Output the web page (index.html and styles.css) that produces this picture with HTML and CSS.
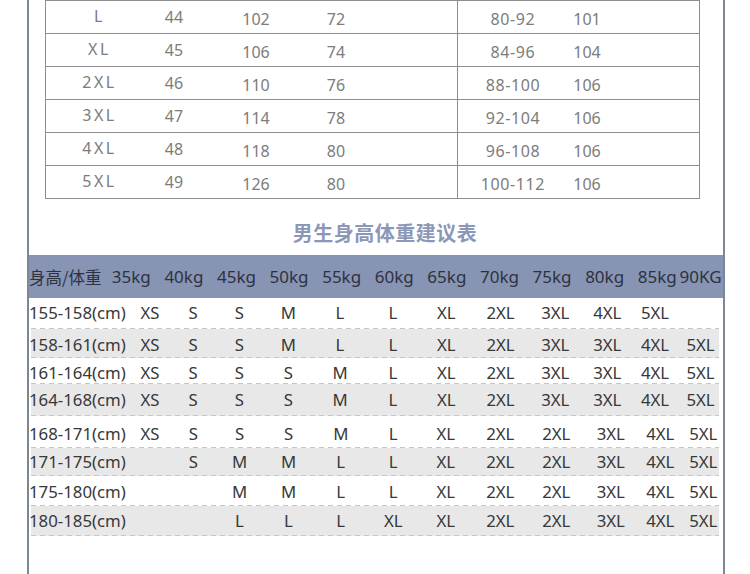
FILE: index.html
```html
<!DOCTYPE html>
<html lang="zh-CN">
<head>
<meta charset="utf-8">
<title>尺码表</title>
<link rel="stylesheet" href="styles.css">
</head>
<body>
<div class="frame">
  <div class="size-table">
    <div class="srow"><span class="sz">L</span><span>44</span><span class="low">102</span><span class="low">72</span><span class="gap"></span><span class="low rng">80-92</span><span class="low">101</span><span></span></div>
    <div class="srow"><span class="sz">XL</span><span>45</span><span class="low">106</span><span class="low">74</span><span class="gap"></span><span class="low rng">84-96</span><span class="low">104</span><span></span></div>
    <div class="srow"><span class="sz">2XL</span><span>46</span><span class="low">110</span><span class="low">76</span><span class="gap"></span><span class="low rng">88-100</span><span class="low">106</span><span></span></div>
    <div class="srow"><span class="sz">3XL</span><span>47</span><span class="low">114</span><span class="low">78</span><span class="gap"></span><span class="low rng">92-104</span><span class="low">106</span><span></span></div>
    <div class="srow"><span class="sz">4XL</span><span>48</span><span class="low">118</span><span class="low">80</span><span class="gap"></span><span class="low rng">96-108</span><span class="low">106</span><span></span></div>
    <div class="srow"><span class="sz">5XL</span><span>49</span><span class="low">126</span><span class="low">80</span><span class="gap"></span><span class="low rng">100-112</span><span class="low">106</span><span></span></div>
  </div>

  <h2 class="title">男生身高体重建议表</h2>

  <div class="head">
    <span class="lbl">身高/体重</span><span>35kg</span><span>40kg</span><span>45kg</span><span>50kg</span><span>55kg</span><span>60kg</span><span>65kg</span><span>70kg</span><span>75kg</span><span>80kg</span><span>85kg</span><span class="last">90KG</span>
  </div>

  <div class="rows">
    <div class="row r1"><span class="lbl">155-158(cm)</span><span>XS</span><span>S</span><span>S</span><span>M</span><span>L</span><span>L</span><span>XL</span><span>2XL</span><span>3XL</span><span>4XL</span><span>5XL</span><span></span></div>
    <div class="row alt r2"><span class="lbl">158-161(cm)</span><span>XS</span><span>S</span><span>S</span><span>M</span><span>L</span><span>L</span><span>XL</span><span>2XL</span><span>3XL</span><span>3XL</span><span>4XL</span><span>5XL</span></div>
    <div class="row r3"><span class="lbl">161-164(cm)</span><span>XS</span><span>S</span><span>S</span><span>S</span><span>M</span><span>L</span><span>XL</span><span>2XL</span><span>3XL</span><span>3XL</span><span>4XL</span><span>5XL</span></div>
    <div class="row alt r4"><span class="lbl">164-168(cm)</span><span>XS</span><span>S</span><span>S</span><span>S</span><span>M</span><span>L</span><span>XL</span><span>2XL</span><span>3XL</span><span>3XL</span><span>4XL</span><span>5XL</span></div>
    <div class="row wide r5"><span class="lbl">168-171(cm)</span><span>XS</span><span>S</span><span>S</span><span>S</span><span>M</span><span>L</span><span>XL</span><span>2XL</span><span>2XL</span><span>3XL</span><span>4XL</span><span>5XL</span></div>
    <div class="row alt wide r6"><span class="lbl">171-175(cm)</span><span></span><span>S</span><span>M</span><span>M</span><span>L</span><span>L</span><span>XL</span><span>2XL</span><span>2XL</span><span>3XL</span><span>4XL</span><span>5XL</span></div>
    <div class="row wide r7"><span class="lbl">175-180(cm)</span><span></span><span></span><span>M</span><span>M</span><span>L</span><span>L</span><span>XL</span><span>2XL</span><span>2XL</span><span>3XL</span><span>4XL</span><span>5XL</span></div>
    <div class="row alt wide r8"><span class="lbl">180-185(cm)</span><span></span><span></span><span>L</span><span>L</span><span>L</span><span>XL</span><span>XL</span><span>2XL</span><span>2XL</span><span>3XL</span><span>4XL</span><span>5XL</span></div>
  </div>
</div>
</body>
</html>
```

FILE: styles.css
```css
* { box-sizing: border-box; }

html, body {
  margin: 0;
  padding: 0;
}

body {
  width: 750px;
  height: 574px;
  overflow: hidden;
  background: #ffffff;
  font-family: "Noto Sans", "Noto Sans CJK SC", sans-serif;
}

.frame {
  margin-left: 27px;
  width: 698px;
  height: 574px;
  border-left: 2px solid #7d8697;
  border-right: 2px solid #7d8697;
}

/* top size table */
.size-table {
  margin-left: 16px;
  width: 655px;
  border: 1px solid #8e8e8e;
  border-bottom: none;
  color: #7c7c7c;
  font-size: 16px;
}

.srow {
  display: grid;
  grid-template-columns: 104px 48px 116px 44px 100px 110px 38px 1fr;
  height: 33px;
  border-bottom: 1px solid #8e8e8e;
}

.srow span {
  display: flex;
  align-items: center;
  justify-content: center;
  padding-bottom: 1px;
}

.srow .sz {
  letter-spacing: 2.5px;
  padding-left: 3px;
  padding-bottom: 2px;
}

.srow .low {
  padding-top: 4px;
  padding-bottom: 0;
}

.srow .rng {
  letter-spacing: 0.6px;
}

.srow .gap {
  border-right: 1px solid #8e8e8e;
}

/* title */
.title {
  margin: 22px 0 10px;
  padding-left: 18px;
  text-align: center;
  font-family: "Noto Sans CJK SC", sans-serif;
  font-size: 20px;
  line-height: 24px;
  font-weight: 700;
  color: #8c97b8;
  letter-spacing: 0.5px;
}

/* header band */
.head {
  display: grid;
  grid-template-columns: 76px repeat(11, 52.6px) 1fr;
  align-items: center;
  height: 43px;
  background: #8894b4;
  color: #2d3240;
  font-size: 17px;
}

.head span {
  text-align: center;
  white-space: nowrap;
}

.head .lbl {
  text-align: left;
  font-family: "Noto Sans CJK SC", sans-serif;
  font-size: 16.5px;
}

.head .last {
  text-align: left;
  margin-left: -4px;
}

/* data rows */
.row {
  display: grid;
  grid-template-columns: 100.5px 41px 45px 47.5px 50.5px 53px 53px 53.5px 55px 54.5px 49.5px 46px 45px;
  align-items: center;
  color: #383838;
  font-size: 16.8px;
  line-height: 20px;
  background-image: repeating-linear-gradient(90deg, #c6c6c6 0 5px, transparent 5px 9px);
  background-size: calc(100% - 6px) 1px;
  background-position: 2px 100%;
  background-repeat: no-repeat;
}

.row.wide {
  grid-template-columns: 100.5px 41px 45.5px 47px 51px 53.5px 51.5px 53.5px 55.5px 56.5px 52.5px 46.5px 39.5px;
}

.row.alt {
  background-image:
    repeating-linear-gradient(90deg, #c6c6c6 0 5px, transparent 5px 9px),
    linear-gradient(#e8e8e8, #e8e8e8);
  background-size: calc(100% - 6px) 1px, calc(100% - 6px) 100%;
  background-position: 2px 100%, 2px 0;
}

.row span {
  text-align: center;
  white-space: nowrap;
}

.row .lbl {
  text-align: left;
}

.r1 { height: 31px; padding-bottom: 2px; }
.r2 { height: 29px; padding-top: 2px; }
.r3 { height: 26px; padding-top: 3px; }
.r4 { height: 32px; padding-bottom: 1px; }
.r5 { height: 32px; padding-top: 3px; }
.r6 { height: 28px; padding-bottom: 1px; }
.r7 { height: 30px; padding-top: 1px; }
.r8 { height: 30px; padding-bottom: 1px; }
```
